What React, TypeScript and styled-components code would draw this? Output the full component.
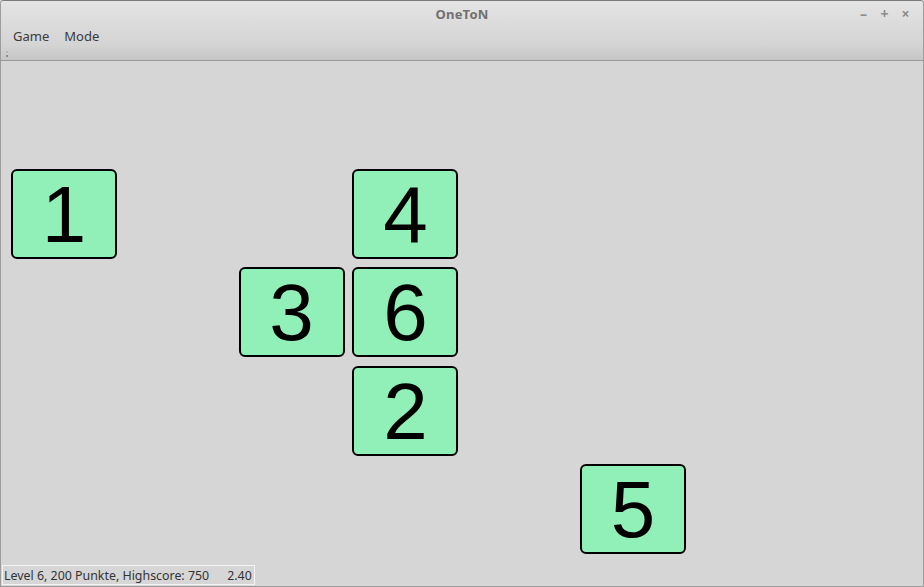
import styled, { createGlobalStyle } from "styled-components";

const GlobalStyle = createGlobalStyle`
  html, body {
    margin: 0;
    padding: 0;
    background: #d6d6d6;
  }
  * {
    box-sizing: border-box;
  }
`;

const Window = styled.div`
  width: 924px;
  height: 587px;
  display: flex;
  flex-direction: column;
  background: #d6d6d6;
  border: 1px solid #9c9c9c;
  border-top-color: #7a7a7a;
  border-radius: 4px 4px 0 0;
  overflow: hidden;
  font-family: "Noto Sans", "DejaVu Sans", sans-serif;
  color: #3c3c3c;
`;

const Header = styled.div`
  background: linear-gradient(#e4e4e4 0%, #dadada 45%, #d4d4d4 75%, #c6c6c6 100%);
  border-bottom: 1px solid #9a9a9a;
  height: 60px;
  display: flex;
  flex-direction: column;
`;

const TitleBar = styled.div`
  height: 25px;
  display: grid;
  grid-template-columns: 1fr auto 1fr;
  align-items: center;
`;

const Title = styled.div`
  grid-column: 2;
  font-size: 13px;
  font-weight: 700;
  color: #707070;
  letter-spacing: 0.2px;
`;

const Controls = styled.div`
  justify-self: end;
  display: flex;
  gap: 8px;
  padding-right: 11px;
  color: #8c8c8c;
  font-size: 14px;
  font-weight: 700;
`;

const Control = styled.span`
  width: 13px;
  text-align: center;
`;

const MenuBar = styled.div`
  height: 19px;
  display: flex;
  align-items: center;
  padding-left: 12px;
  gap: 15px;
  font-size: 13px;
`;

const MenuItem = styled.span`
  color: #3a3a3a;
`;

const Handle = styled.div`
  margin: 6px 0 0 5px;
  width: 2px;
  display: flex;
  flex-direction: column;
  gap: 2px;
`;

const Dot = styled.span<{ $dark?: boolean }>`
  width: 2px;
  height: 2px;
  background: ${(p) => (p.$dark ? "#8a8a8a" : "#b8b8b8")};
`;

const Board = styled.div`
  flex: 1;
  display: grid;
  grid-template-columns: repeat(8, 106px);
  grid-template-rows: repeat(4, 90px);
  column-gap: 7.8px;
  row-gap: 8.33px;
  padding: 108px 0 0 10px;
  align-content: start;
`;

const Tile = styled.div<{ $col: number; $row: number }>`
  grid-column: ${(p) => p.$col};
  grid-row: ${(p) => p.$row};
  background: #90f0b8;
  border: 2px solid #000;
  border-radius: 6px;
  display: flex;
  align-items: center;
  justify-content: center;
  font-family: "Liberation Sans", Arial, sans-serif;
  font-size: 80px;
  line-height: 1;
  color: #000;
  padding-top: 2px;
`;

const StatusBar = styled.div`
  height: 21px;
  display: flex;
  align-items: flex-start;
  padding-left: 1px;
`;

const StatusBox = styled.div`
  display: flex;
  gap: 18px;
  height: 20px;
  align-items: center;
  padding: 0 2px 0 1px;
  border: 1px solid #f4f4f4;
  font-size: 12.4px;
  color: #333;
`;

const tiles = [
  { n: 1, col: 1, row: 1 },
  { n: 4, col: 4, row: 1 },
  { n: 3, col: 3, row: 2 },
  { n: 6, col: 4, row: 2 },
  { n: 2, col: 4, row: 3 },
  { n: 5, col: 6, row: 4 },
];

export default function App() {
  return (
    <>
      <GlobalStyle />
      <Window>
        <Header>
          <TitleBar>
            <Title>OneToN</Title>
            <Controls>
              <Control>–</Control>
              <Control>+</Control>
              <Control>×</Control>
            </Controls>
          </TitleBar>
          <MenuBar>
            <MenuItem>Game</MenuItem>
            <MenuItem>Mode</MenuItem>
          </MenuBar>
          <Handle>
            <Dot />
            <Dot $dark />
          </Handle>
        </Header>
        <Board>
          {tiles.map((t) => (
            <Tile key={t.n} $col={t.col} $row={t.row}>
              {t.n}
            </Tile>
          ))}
        </Board>
        <StatusBar>
          <StatusBox>
            <span>Level 6, 200 Punkte, Highscore: 750</span>
            <span>2.40</span>
          </StatusBox>
        </StatusBar>
      </Window>
    </>
  );
}
